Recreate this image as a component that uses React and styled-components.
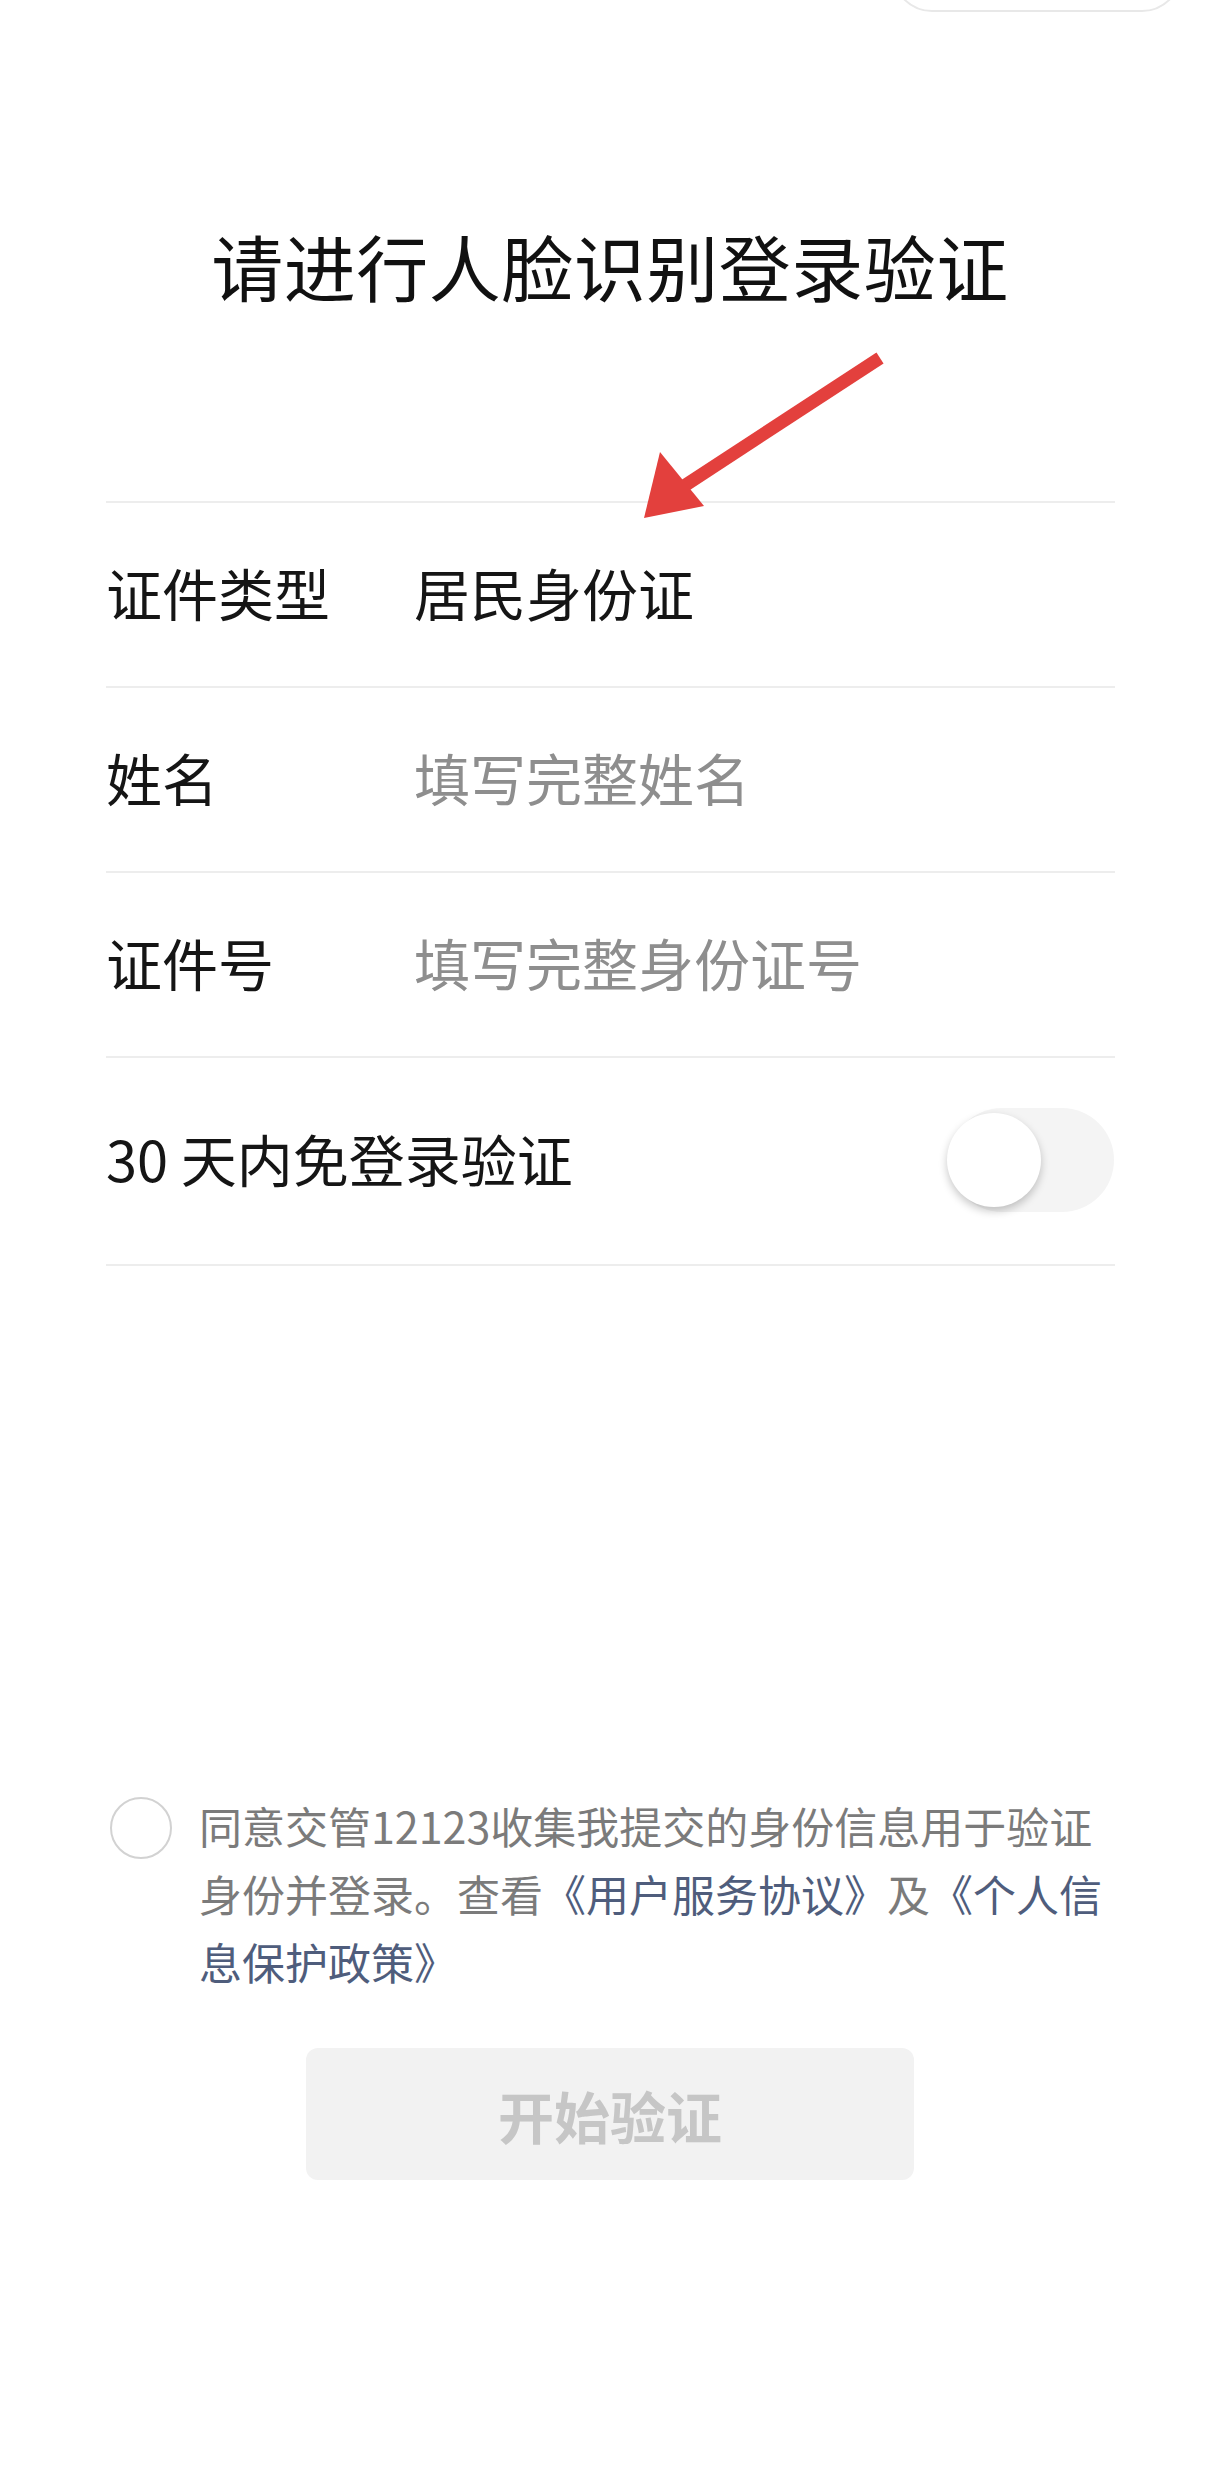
import React, { useState } from 'react'
import styled, { createGlobalStyle } from 'styled-components'

const GlobalStyle = createGlobalStyle`
	html, body {
		margin: 0;
		padding: 0;
		background: #ffffff;
	}
	body {
		font-family: "Noto Sans CJK SC", "Noto Sans", sans-serif;
		color: #111111;
	}
`

const fields = [
	{ label: '证件类型', value: '居民身份证' },
	{ label: '姓名', placeholder: '填写完整姓名' },
	{ label: '证件号', placeholder: '填写完整身份证号' },
]

const App = () => {
	const [ remember, setRemember ] = useState(false)
	const [ agreed, setAgreed ] = useState(false)

	return (
		<Page>
			<GlobalStyle />
			<Capsule />
			<Title>请进行人脸识别登录验证</Title>
			<Arrow viewBox="0 0 270 180" aria-hidden="true">
				<line x1="262" y1="6" x2="60" y2="138" stroke="#e3403d" strokeWidth="13" />
				<polygon points="26,166 42,100 86,154" fill="#e3403d" />
			</Arrow>

			<Form>
				{fields.map((f) => (
					<Row key={f.label}>
						<Label>{f.label}</Label>
						{f.value ? <Value>{f.value}</Value> : <Input placeholder={f.placeholder} />}
					</Row>
				))}
				<Row tall>
					<Label wide>30 天内免登录验证</Label>
					<Switch on={remember} onClick={() => setRemember(!remember)}>
						<Knob on={remember} />
					</Switch>
				</Row>
			</Form>

			<Agreement>
				<Radio checked={agreed} onClick={() => setAgreed(!agreed)} />
				<AgreeText>
					同意交管12123收集我提交的身份信息用于验证身份并登录。查看<Link>《用户服务协议》</Link>及<Link>《个人信息保护政策》</Link>
				</AgreeText>
			</Agreement>

			<StartButton disabled={!agreed}>开始验证</StartButton>
		</Page>
	)
}

const Page = styled.div`
	position: relative;
	width: 1220px;
	min-height: 2485px;
	display: flex;
	flex-direction: column;
	align-items: center;
	overflow: hidden;
`

const Capsule = styled.div`
	position: absolute;
	top: -68px;
	right: 38px;
	width: 290px;
	height: 80px;
	box-sizing: border-box;
	border: 2px solid #e8e8e8;
	border-radius: 40px;
	background: #ffffff;
`

const Title = styled.h1`
	margin: 215px 0 0;
	font-size: 72px;
	line-height: 100px;
	font-weight: 400;
	color: #111111;
	letter-spacing: 0.5px;
`

const Arrow = styled.svg`
	position: absolute;
	top: 352px;
	left: 618px;
	width: 270px;
	height: 180px;
	z-index: 2;
`

const Form = styled.div`
	align-self: stretch;
	margin: 186px 105px 0 106px;
	border-top: 2px solid #ededed;
`

const Row = styled.div`
	display: flex;
	align-items: center;
	justify-content: space-between;
	box-sizing: border-box;
	height: ${(p) => (p.tall ? 208 : 185)}px;
	padding-bottom: 6px;
	border-bottom: 2px solid #ededed;
`

const Label = styled.div`
	flex: ${(p) => (p.wide ? '1' : '0 0 308px')};
	font-size: 56px;
	line-height: 80px;
	color: #151515;
`

const Value = styled.div`
	flex: 1;
	font-size: 56px;
	line-height: 80px;
	color: #151515;
`

const Input = styled.input`
	flex: 1;
	min-width: 0;
	border: none;
	outline: none;
	padding: 0;
	background: transparent;
	font-family: inherit;
	font-size: 56px;
	line-height: 80px;
	color: #151515;

	&::placeholder {
		color: #8e8e8e;
	}
`

const Switch = styled.div`
	position: relative;
	width: 164px;
	height: 104px;
	margin-right: 1px;
	margin-top: 4px;
	border-radius: 52px;
	background: ${(p) => (p.on ? '#3f7cf6' : '#f4f4f4')};
	cursor: pointer;
`

const Knob = styled.div`
	position: absolute;
	top: 5px;
	left: ${(p) => (p.on ? '68px' : '-3px')};
	width: 94px;
	height: 94px;
	border-radius: 50%;
	background: #ffffff;
	box-shadow: 0 4px 8px rgba(0, 0, 0, 0.22);
`

const Agreement = styled.div`
	align-self: stretch;
	display: flex;
	align-items: flex-start;
	margin: 525px 105px 0 110px;
`

const Radio = styled.div`
	flex: 0 0 auto;
	width: 62px;
	height: 62px;
	margin-top: 6px;
	margin-right: 27px;
	box-sizing: border-box;
	border-radius: 50%;
	border: 2px solid ${(p) => (p.checked ? '#3f7cf6' : '#d2d2d2')};
	background: ${(p) => (p.checked ? '#3f7cf6' : '#ffffff')};
	cursor: pointer;
`

const AgreeText = styled.p`
	margin: 0;
	font-size: 43px;
	line-height: 68px;
	color: #7b7b7b;
`

const Link = styled.span`
	color: #4f5d7c;
`

const StartButton = styled.button`
	margin-top: 53px;
	width: 608px;
	height: 132px;
	border: none;
	border-radius: 12px;
	background: #f2f2f2;
	color: #c6c6c6;
	font-family: inherit;
	font-size: 56px;
	font-weight: 700;
	cursor: not-allowed;
`

export default App
